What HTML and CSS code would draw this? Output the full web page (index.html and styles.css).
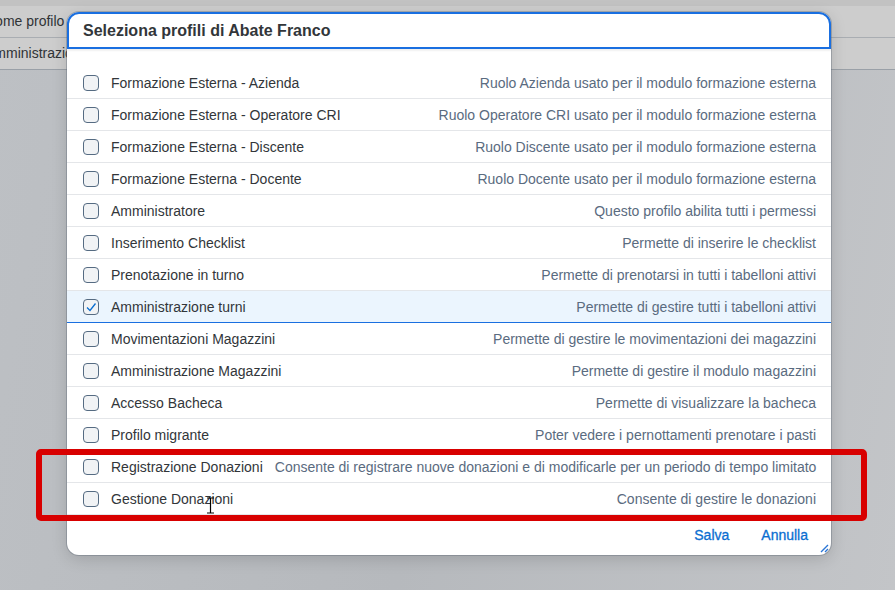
FILE: index.html
```html
<!DOCTYPE html>
<html lang="it">
<head>
    <meta charset="UTF-8">
    <title>Seleziona profili</title>
    <link rel="stylesheet" href="styles.css">
</head>
<body>

    <!-- pagina sotto il dialogo -->
    <div class="page">
        <div class="page-strip"></div>
        <div class="page-row head">Nome profilo</div>
        <div class="page-row">Amministrazione</div>
    </div>

    <!-- dialogo -->
    <div class="dialog">
        <div class="dialog-title">Seleziona profili di Abate Franco</div>

        <ul class="profile-list" id="profileList"></ul>

        <div class="dialog-footer">
            <a href="#" class="action">Salva</a>
            <a href="#" class="action">Annulla</a>
        </div>

        <svg class="grip" width="10" height="10" viewBox="0 0 10 10">
            <path d="M2 9 L9 2 M6 9 L9 6" stroke="#2a76d6" stroke-width="1.4" fill="none"/>
        </svg>
    </div>

    <!-- evidenziazione -->
    <div class="highlight"></div>

    <svg class="cursor" width="9" height="17" viewBox="0 0 9 17">
        <path d="M1 1 H8 M4.5 1 V16 M1 16 H8" stroke="#000" stroke-width="1.2" fill="none"/>
    </svg>

    <script>
        const profili = [
            ['Formazione Esterna - Azienda', 'Ruolo Azienda usato per il modulo formazione esterna'],
            ['Formazione Esterna - Operatore CRI', 'Ruolo Operatore CRI usato per il modulo formazione esterna'],
            ['Formazione Esterna - Discente', 'Ruolo Discente usato per il modulo formazione esterna'],
            ['Formazione Esterna - Docente', 'Ruolo Docente usato per il modulo formazione esterna'],
            ['Amministratore', 'Questo profilo abilita tutti i permessi'],
            ['Inserimento Checklist', 'Permette di inserire le checklist'],
            ['Prenotazione in turno', 'Permette di prenotarsi in tutti i tabelloni attivi'],
            ['Amministrazione turni', 'Permette di gestire tutti i tabelloni attivi', true],
            ['Movimentazioni Magazzini', 'Permette di gestire le movimentazioni dei magazzini'],
            ['Amministrazione Magazzini', 'Permette di gestire il modulo magazzini'],
            ['Accesso Bacheca', 'Permette di visualizzare la bacheca'],
            ['Profilo migrante', 'Poter vedere i pernottamenti prenotare i pasti'],
            ['Registrazione Donazioni', 'Consente di registrare nuove donazioni e di modificarle per un periodo di tempo limitato'],
            ['Gestione Donazioni', 'Consente di gestire le donazioni']
        ];

        const list = document.getElementById('profileList');
        profili.forEach(function (p) {
            const li = document.createElement('li');
            li.className = 'profile' + (p[2] ? ' selected' : '');
            li.innerHTML =
                '<span class="check">' +
                (p[2] ? '<svg width="12" height="12" viewBox="0 0 12 12"><path d="M2 6.5 L5 9.5 L10.5 2.5" stroke="#0a6ed1" stroke-width="1.3" fill="none"/></svg>' : '') +
                '</span>' +
                '<span class="name">' + p[0] + '</span>' +
                '<span class="desc">' + p[1] + '</span>';
            list.appendChild(li);
        });
    </script>

</body>
</html>
```

FILE: styles.css
```css
body {
    margin: 0;
    width: 895px;
    height: 590px;
    overflow: hidden;
    position: relative;
    font-family: "Liberation Sans", Arial, sans-serif;
    background: linear-gradient(100deg, #bdc0c4 0%, #b6b9bd 50%, #c3c5c8 100%);
}

/* pagina di sfondo (oscurata) */
.page {
    background-color: #cdcdcd;
}
.page-strip {
    height: 6px;
    background-color: #c2c2c2;
}
.page-row {
    height: 31px;
    line-height: 31px;
    margin-left: -15px;
    font-size: 14px;
    color: #303336;
    border-bottom: 1px solid #a9adb2;
}
.page-row + .page-row {
    border-bottom-color: #9aa0a7;
}

/* dialogo */
.dialog {
    position: absolute;
    left: 67px;
    top: 12px;
    width: 764px;
    height: 543px;
    background: #fff;
    border-radius: 12px;
    box-shadow: 0 0 0 1px rgba(90, 100, 115, 0.35), 0 4px 16px rgba(0, 0, 0, 0.15);
    display: flex;
    flex-direction: column;
}

.dialog-title {
    height: 33px;
    line-height: 33px;
    padding-left: 14px;
    border: 2px solid #1a6fe0;
    border-radius: 12px 12px 0 0;
    font-size: 16px;
    font-weight: bold;
    color: #32363a;
    box-shadow: 0 2px 2px rgba(0, 0, 0, 0.06);
}

.profile-list {
    list-style: none;
    margin: 18px 0 0 0;
    padding: 0;
}

.profile {
    display: flex;
    align-items: center;
    height: 31px;
    padding: 0 15px 0 16px;
    border-bottom: 1px solid #e4e6e9;
    font-size: 14px;
}
.profile.selected {
    background-color: #ebf5fe;
    border-bottom-color: #1a6fe0;
}

.check {
    width: 14px;
    height: 14px;
    border: 1px solid #556b82;
    border-radius: 4px;
    background-color: #f1f3f5;
    display: flex;
    align-items: center;
    justify-content: center;
    flex-shrink: 0;
}

.name {
    margin-left: 12px;
    color: #32363a;
    white-space: nowrap;
}

.desc {
    margin-left: auto;
    padding-left: 12px;
    color: #5a6b80;
    white-space: nowrap;
}

.dialog-footer {
    display: flex;
    justify-content: flex-end;
    align-items: center;
    gap: 32px;
    height: 40px;
    padding-right: 23px;
}

.action {
    color: #0a6ed1;
    font-size: 14px;
    -webkit-text-stroke: 0.3px #0a6ed1;
    text-decoration: none;
}

.grip {
    position: absolute;
    right: 2px;
    bottom: 2px;
}

/* riquadro rosso */
.highlight {
    position: absolute;
    left: 36px;
    top: 449px;
    width: 819px;
    height: 60px;
    border: 6px solid #d80000;
    border-radius: 5px;
}

.cursor {
    position: absolute;
    left: 206px;
    top: 497px;
}
```
